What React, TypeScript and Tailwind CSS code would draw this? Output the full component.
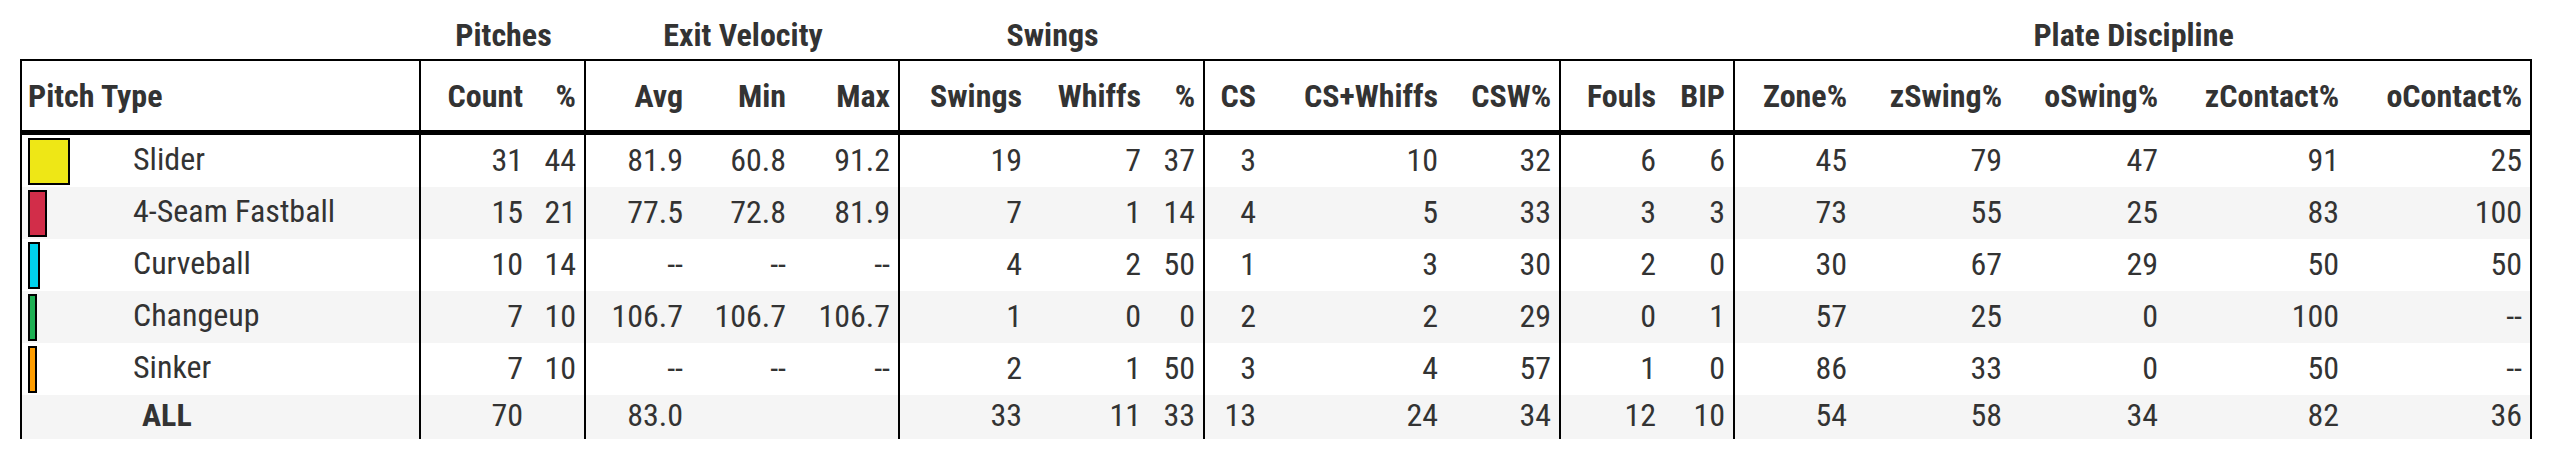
import React from "react"

type Row = {
  name: string
  color: string
  box: string
  cells: (string | number)[]
}

// pitch rows, cells follow the 18 stat columns left to right
const rows: Row[] = [
  {
    name: "Slider",
    color: "bg-[#eee716]",
    box: "w-[42px]",
    cells: [31, 44, "81.9", "60.8", "91.2", 19, 7, 37, 3, 10, 32, 6, 6, 45, 79, 47, 91, 25],
  },
  {
    name: "4-Seam Fastball",
    color: "bg-[#d22d49]",
    box: "w-[19px]",
    cells: [15, 21, "77.5", "72.8", "81.9", 7, 1, 14, 4, 5, 33, 3, 3, 73, 55, 25, 83, 100],
  },
  {
    name: "Curveball",
    color: "bg-[#00d1ed]",
    box: "w-[12px]",
    cells: [10, 14, "--", "--", "--", 4, 2, 50, 1, 3, 30, 2, 0, 30, 67, 29, 50, 50],
  },
  {
    name: "Changeup",
    color: "bg-[#1db053]",
    box: "w-[9px]",
    cells: [7, 10, "106.7", "106.7", "106.7", 1, 0, 0, 2, 2, 29, 0, 1, 57, 25, 0, 100, "--"],
  },
  {
    name: "Sinker",
    color: "bg-[#fe9d00]",
    box: "w-[9px]",
    cells: [7, 10, "--", "--", "--", 2, 1, 50, 3, 4, 57, 1, 0, 86, 33, 0, 50, "--"],
  },
]

const totals: (string | number)[] = [70, "", "83.0", "", "", 33, 11, 33, 13, 24, 34, 12, 10, 54, 58, 34, 82, 36]

const headers = [
  "Count",
  "%",
  "Avg",
  "Min",
  "Max",
  "Swings",
  "Whiffs",
  "%",
  "CS",
  "CS+Whiffs",
  "CSW%",
  "Fouls",
  "BIP",
  "Zone%",
  "zSwing%",
  "oSwing%",
  "zContact%",
  "oContact%",
]

const widths = [
  "w-[401px]",
  "w-[110px]",
  "w-[55px]",
  "w-[105px]",
  "w-[103px]",
  "w-[106px]",
  "w-[130px]",
  "w-[119px]",
  "w-[56px]",
  "w-[59px]",
  "w-[182px]",
  "w-[115px]",
  "w-[103px]",
  "w-[71px]",
  "w-[120px]",
  "w-[155px]",
  "w-[156px]",
  "w-[181px]",
  "w-[185px]",
]

// stat columns (index into cells) that close a group with a rule
const groupEnds = new Set([1, 4, 7, 10, 12, 17])

const edge = (i: number) => (groupEnds.has(i) ? "border-r-2 border-black" : "")

export default function App() {
  return (
    <div className="h-[462px] w-[2550px] bg-white pl-5 font-['Roboto_Condensed',Roboto,sans-serif] leading-[38px] text-[#333]">
      <table className="w-[2512px] table-fixed border-separate border-spacing-0">
        <colgroup>
          {widths.map((w, i) => (
            <col key={i} className={w} />
          ))}
        </colgroup>
        <thead>
          <tr className="h-[59px] text-[32px] font-bold">
            <th className="p-0" />
            <th colSpan={2} className="p-0 pb-[5px] text-center align-bottom">
              Pitches
            </th>
            <th colSpan={3} className="p-0 pb-[5px] text-center align-bottom">
              Exit Velocity
            </th>
            <th colSpan={3} className="p-0 pb-[5px] text-center align-bottom">
              Swings
            </th>
            <th colSpan={5} className="p-0" />
            <th colSpan={5} className="p-0 pb-[5px] text-center align-bottom">
              Plate Discipline
            </th>
          </tr>
          <tr className="h-[76px] text-[32px] font-bold">
            <th className="border-y-2 border-b-[5px] border-l-2 border-r-2 border-black p-0 pl-[6px] text-left align-middle">
              Pitch Type
            </th>
            {headers.map((h, i) => (
              <th
                key={i}
                className={`border-t-2 border-b-[5px] border-black p-0 pr-2 text-right align-middle ${edge(i)}`}
              >
                {h}
              </th>
            ))}
          </tr>
        </thead>
        <tbody className="text-[32px]">
          {rows.map((row, r) => (
            <tr key={row.name} className={r % 2 === 1 ? "h-[52px] bg-[#f5f5f5]" : "h-[52px] bg-white"}>
              <td className="border-x-2 border-black p-0 pl-[6px] align-middle">
                <div className="flex items-center">
                  <div className="w-[105px]">
                    <div className={`h-[47px] border-2 border-black ${row.box} ${row.color}`} />
                  </div>
                  <span className="pb-[4px]">{row.name}</span>
                </div>
              </td>
              {row.cells.map((c, i) => (
                <td key={i} className={`p-0 pb-[3px] pr-2 text-right align-middle ${edge(i)}`}>
                  {c}
                </td>
              ))}
            </tr>
          ))}
          <tr className="h-[44px] bg-[#f5f5f5]">
            <td className="border-x-2 border-black p-0 pb-[4px] pl-[120px] align-middle font-bold">ALL</td>
            {totals.map((c, i) => (
              <td key={i} className={`p-0 pb-[4px] pr-2 text-right align-middle ${edge(i)}`}>
                {c}
              </td>
            ))}
          </tr>
        </tbody>
      </table>
    </div>
  )
}
